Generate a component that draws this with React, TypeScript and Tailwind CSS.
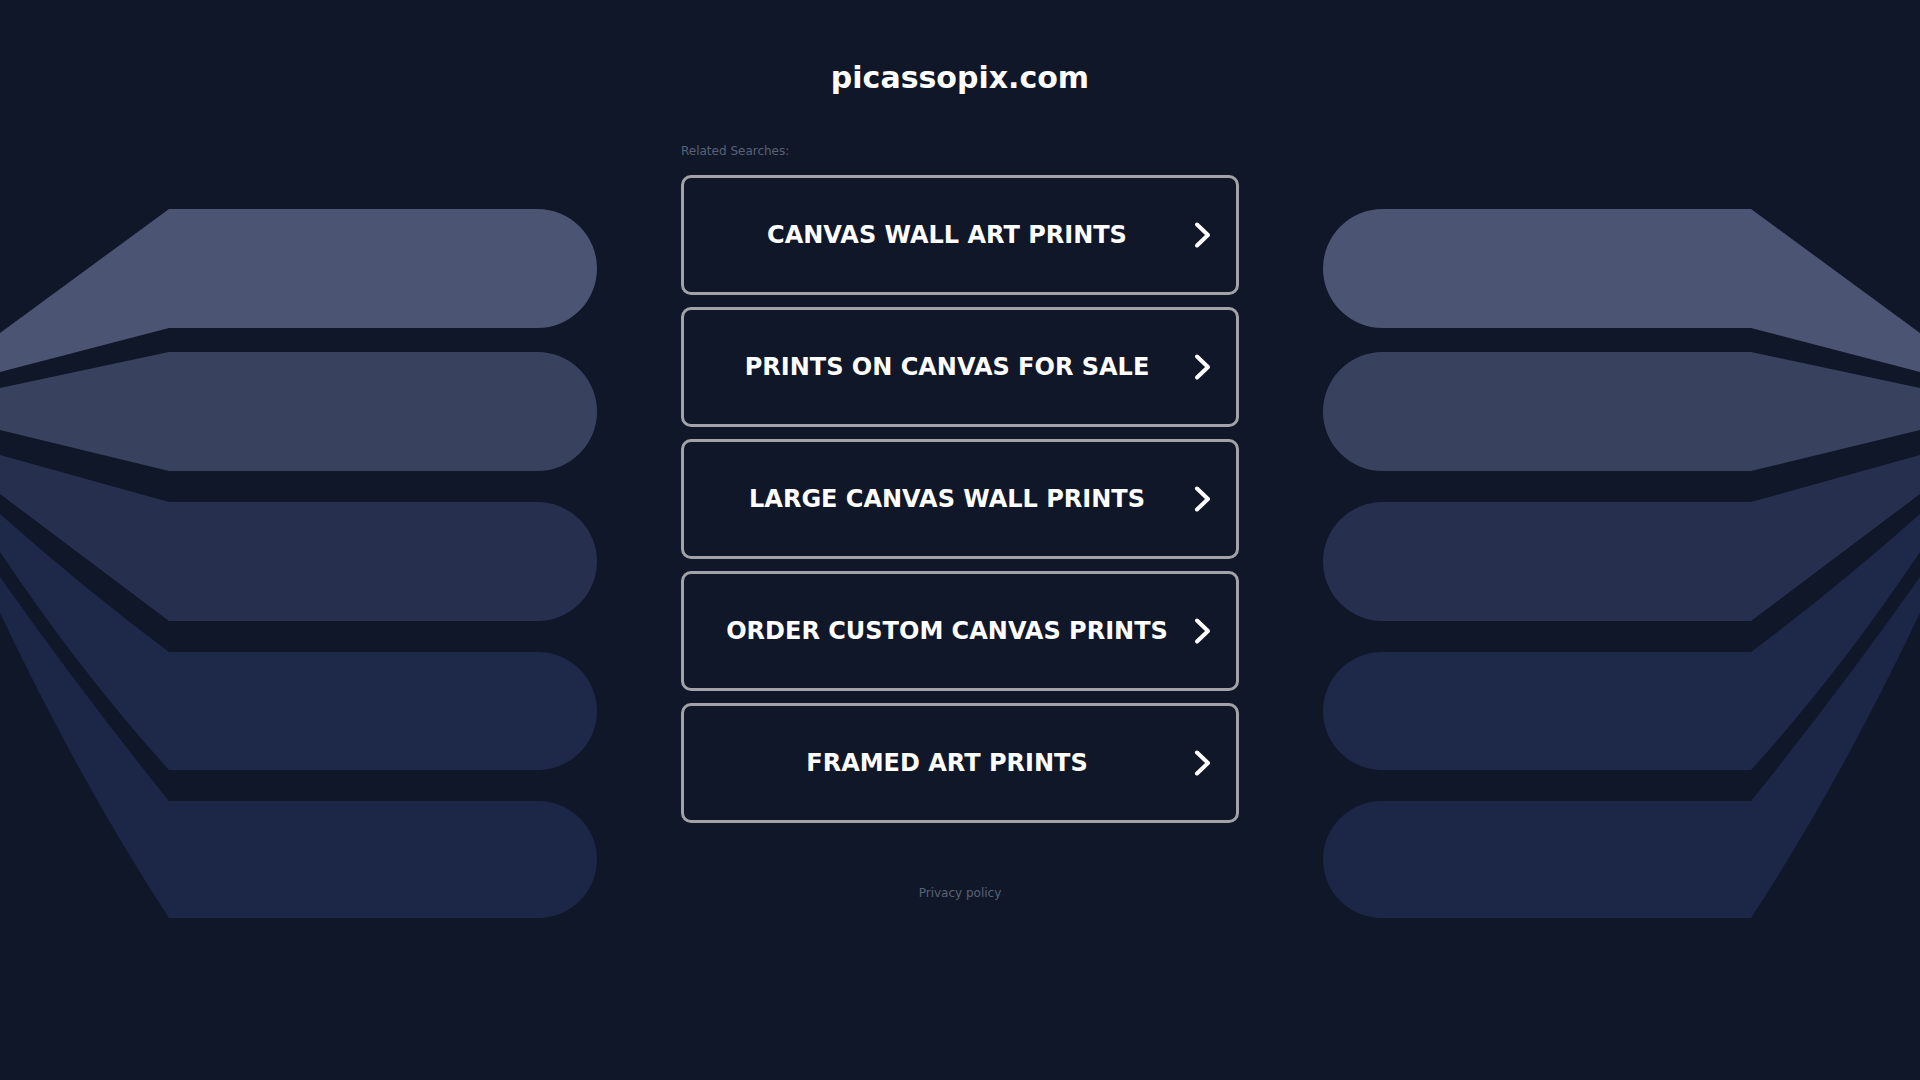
import React from "react";

type Pill = {
  top: number;
  bottom: number;
  t0: number;
  b0: number;
  color: string;
  tk?: number;
  bk?: number;
};

const pills: Pill[] = [
  { top: 209, bottom: 328, t0: 333, b0: 372, color: "#4b5573" },
  { top: 352, bottom: 471, t0: 388, b0: 430, color: "#38425f" },
  { top: 502, bottom: 621, t0: 455, b0: 494, color: "#262f4e" },
  { top: 652, bottom: 770, t0: 514, b0: 552, color: "#1e2849", tk: 0.54, bk: 0.56 },
  { top: 801, bottom: 918, t0: 577, b0: 613, color: "#1c2647", tk: 0.53, bk: 0.565 },
];

function pillPath(p: Pill) {
  const r = (p.bottom - p.top) / 2;
  const ex = 597 - r;
  const top =
    p.tk !== undefined
      ? `M 0 ${p.t0} Q 84 ${p.t0 + (p.top - p.t0) * p.tk} 169 ${p.top}`
      : `M 0 ${p.t0} L 169 ${p.top}`;
  const bottom =
    p.bk !== undefined
      ? `L 169 ${p.bottom} Q 82 ${p.b0 + (p.bottom - p.b0) * p.bk} 0 ${p.b0} Z`
      : `L 169 ${p.bottom} L 0 ${p.b0} Z`;
  return `${top} L ${ex} ${p.top} A ${r} ${r} 0 0 1 ${ex} ${p.bottom} ${bottom}`;
}

function Wing({ mirrored }: { mirrored?: boolean }) {
  return (
    <svg
      width="600"
      height="1080"
      viewBox="0 0 600 1080"
      className={mirrored ? "absolute right-0 top-0 -scale-x-100" : "absolute left-0 top-0"}
    >
      {pills.map((p, i) => (
        <path key={i} d={pillPath(p)} fill={p.color} />
      ))}
    </svg>
  );
}

const items = [
  "CANVAS WALL ART PRINTS",
  "PRINTS ON CANVAS FOR SALE",
  "LARGE CANVAS WALL PRINTS",
  "ORDER CUSTOM CANVAS PRINTS",
  "FRAMED ART PRINTS",
];

function Chevron() {
  return (
    <svg
      width="19"
      height="29"
      viewBox="0 0 19 29"
      className="absolute right-[24px] top-1/2 -translate-y-1/2"
    >
      <path
        d="M4 4 L15 14.5 L4 25"
        fill="none"
        stroke="#ffffff"
        strokeWidth="4"
        strokeLinecap="round"
        strokeLinejoin="round"
      />
    </svg>
  );
}

export default function App() {
  return (
    <div className="relative w-full h-[1080px] overflow-hidden bg-[#101729] font-['DejaVu_Sans',sans-serif]">
      <Wing />
      <Wing mirrored />
      <div className="relative flex flex-col items-center pt-[60px]">
        <h1 className="text-[30px] leading-[35px] font-bold text-white">picassopix.com</h1>
        <div className="w-[558px] mt-[49px]">
          <div className="text-[12px] leading-[14px] text-[#5a6175]">Related Searches:</div>
          <div className="mt-[17px] flex flex-col gap-[12px]">
            {items.map((t) => (
              <a
                key={t}
                href="#"
                className="relative flex items-center h-[120px] rounded-[10px] border-[3px] border-[#a2a3a8] bg-[#101729] no-underline"
              >
                <span className="w-full pr-[26px] text-center text-[24px] font-bold text-white leading-[28px]">
                  {t}
                </span>
                <Chevron />
              </a>
            ))}
          </div>
        </div>
        <div className="mt-[63px] text-[12px] leading-[14px] text-[#5a6175]">Privacy policy</div>
      </div>
    </div>
  );
}
